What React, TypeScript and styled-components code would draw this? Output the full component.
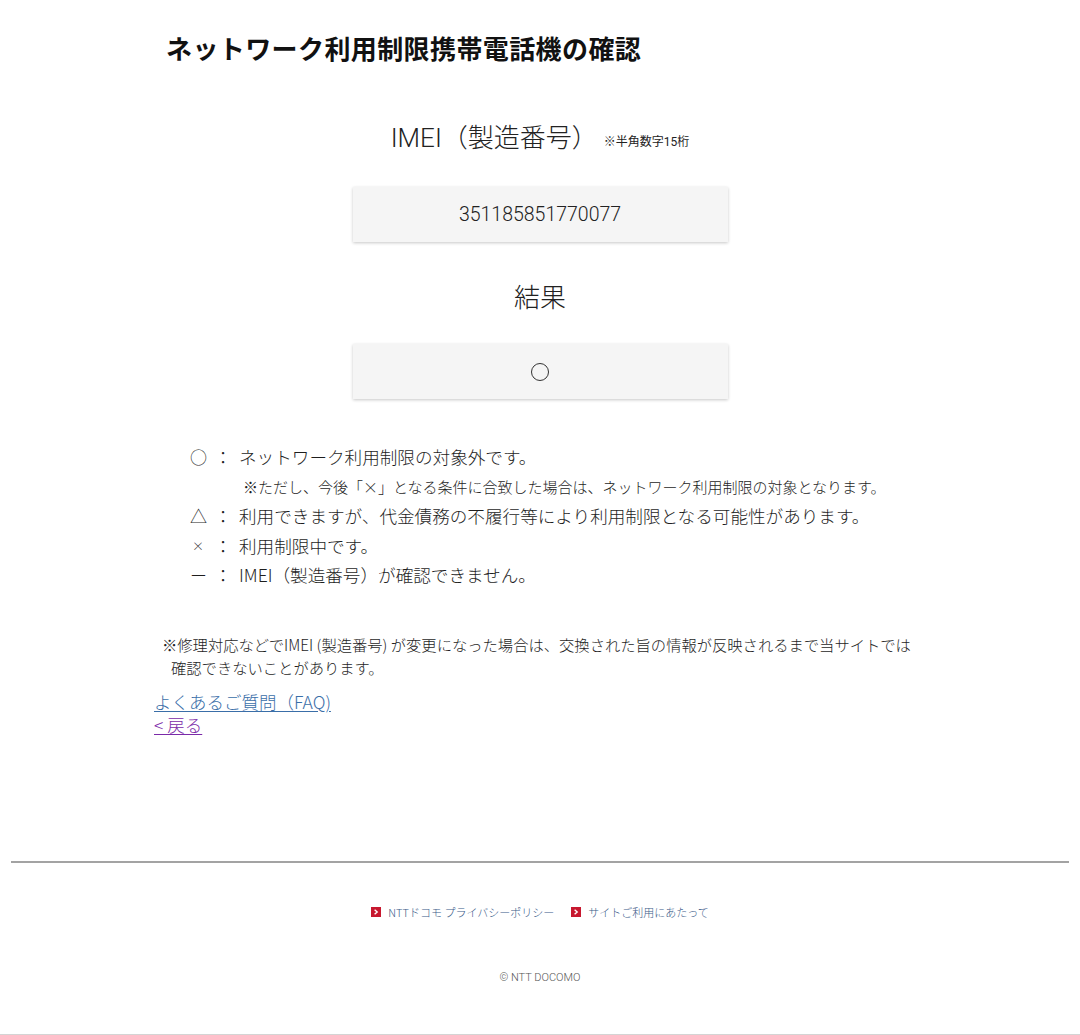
import React from "react";
import styled, { createGlobalStyle } from "styled-components";

const Global = createGlobalStyle`
  html, body { margin: 0; padding: 0; background: #fff; }
  body {
    font-family: Roboto, "Noto Sans CJK JP", sans-serif;
    color: #333;
  }
`;

const Page = styled.div`
  width: 1080px;
  min-height: 1035px;
  display: flex;
  flex-direction: column;
  border-bottom: 1px solid #d4d4d4;
  box-sizing: border-box;
`;

const Main = styled.main`
  width: 780px;
  margin: 0 auto;
  padding-top: 30px;
  display: flex;
  flex-direction: column;
`;

const Title = styled.h1`
  margin: 0;
  padding-left: 16px;
  font-family: "Noto Sans CJK JP", sans-serif;
  font-size: 26px;
  font-weight: 700;
  line-height: 36px;
  color: #111;
  letter-spacing: 0.4px;
`;

const Heading = styled.h2<{ $top: number }>`
  margin: ${(p) => p.$top}px 0 0;
  text-align: center;
  font-family: Roboto, "Noto Sans CJK JP", sans-serif;
  font-size: 26px;
  font-weight: 300;
  line-height: 36px;
  color: #222;
`;

const Note = styled.span`
  font-size: 12px;
  margin-left: 6px;
  font-weight: 400;
  vertical-align: 1px;
`;

const ValueBox = styled.div<{ $top: number }>`
  width: 375px;
  height: 55px;
  margin: ${(p) => p.$top}px auto 0;
  background: #f5f5f5;
  box-shadow: 0 1px 3px rgba(0, 0, 0, 0.22);
  display: flex;
  align-items: center;
  justify-content: center;
  font-family: Roboto, "Noto Sans CJK JP", sans-serif;
  font-size: 19.5px;
  font-weight: 300;
  color: #222;
`;

const Circle = styled.span`
  width: 18px;
  height: 18px;
  border: 1px solid #333;
  border-radius: 50%;
  box-sizing: border-box;
`;

const Legend = styled.ul`
  list-style: none;
  margin: 43px 0 0;
  padding: 0 0 0 40px;
  font-family: "Noto Sans CJK JP", sans-serif;
  font-size: 17.6px;
  font-weight: 300;
  line-height: 29.5px;
  color: #1e1e1e;
`;

const LegendRow = styled.li`
  display: flex;
  align-items: center;
`;

const Mark = styled.span`
  width: 24px;
  display: flex;
  align-items: center;
  font-size: 17px;
`;

const SmallMark = styled.span`
  font-size: 12px;
  padding-left: 2px;
`;

const Colon = styled.span`
  width: 18px;
  margin-right: 7px;
  text-align: center;
`;

const SubNote = styled.li`
  padding-left: 53px;
  font-size: 15px;
`;

const Remark = styled.p`
  margin: 43px 0 0;
  padding-left: 12px;
  font-family: "Noto Sans CJK JP", sans-serif;
  font-size: 15.3px;
  font-weight: 300;
  line-height: 23px;
  color: #1e1e1e;
  white-space: nowrap;
`;

const RemarkIndent = styled.span`
  display: block;
  padding-left: 9px;
`;

const Links = styled.div`
  margin-top: 11px;
  padding-left: 4px;
  display: flex;
  flex-direction: column;
  align-items: flex-start;
  font-family: "Noto Sans CJK JP", sans-serif;
  font-size: 17.5px;
  font-weight: 300;
  line-height: 23px;
`;

const TextLink = styled.a<{ $visited?: boolean }>`
  color: ${(p) => (p.$visited ? "#7b2aa8" : "#3a6ea8")};
  text-decoration: underline;
  text-underline-offset: 2px;
`;

const Rule = styled.hr`
  margin: 125px 11px 0;
  border: none;
  height: 2px;
  background: #a3a3a3;
`;

const Footer = styled.footer`
  display: flex;
  flex-direction: column;
  align-items: center;
  padding-top: 41px;
`;

const FooterNav = styled.nav`
  display: flex;
  gap: 17px;
  font-family: "Noto Sans CJK JP", sans-serif;
  font-size: 11px;
  font-weight: 300;
  line-height: 16px;
`;

const FooterLink = styled.a`
  display: flex;
  align-items: center;
  gap: 7px;
  color: #3a5a88;
  text-decoration: none;
`;

const RedIcon = styled.span`
  width: 10px;
  height: 10px;
  background: #c7182f;
  display: flex;
  align-items: center;
  justify-content: center;
`;

const Copy = styled.p`
  margin: 51px 0 0;
  font-family: Roboto, sans-serif;
  font-size: 11px;
  font-weight: 300;
  color: #555;
`;

const Chevron = () => (
  <svg width="6" height="6" viewBox="0 0 6 6">
    <path d="M1.6 0.8 L4.2 3 L1.6 5.2" stroke="#fff" strokeWidth="1.4" fill="none" />
  </svg>
);

export default function App() {
  return (
    <Page>
      <Global />
      <Main>
        <Title>ネットワーク利用制限携帯電話機の確認</Title>
        <Heading $top={54}>
          IMEI（製造番号）<Note>※半角数字15桁</Note>
        </Heading>
        <ValueBox $top={27}>351185851770077</ValueBox>
        <Heading $top={38}>結果</Heading>
        <ValueBox $top={28}>
          <Circle />
        </ValueBox>
        <Legend>
          <LegendRow>
            <Mark>○</Mark>
            <Colon>：</Colon>
            ネットワーク利用制限の対象外です。
          </LegendRow>
          <SubNote>※ただし、今後「×」となる条件に合致した場合は、ネットワーク利用制限の対象となります。</SubNote>
          <LegendRow>
            <Mark>△</Mark>
            <Colon>：</Colon>
            利用できますが、代金債務の不履行等により利用制限となる可能性があります。
          </LegendRow>
          <LegendRow>
            <Mark>
              <SmallMark>×</SmallMark>
            </Mark>
            <Colon>：</Colon>
            利用制限中です。
          </LegendRow>
          <LegendRow>
            <Mark>ー</Mark>
            <Colon>：</Colon>
            IMEI（製造番号）が確認できません。
          </LegendRow>
        </Legend>
        <Remark>
          ※修理対応などでIMEI (製造番号) が変更になった場合は、交換された旨の情報が反映されるまで当サイトでは
          <RemarkIndent>確認できないことがあります。</RemarkIndent>
        </Remark>
        <Links>
          <TextLink href="#faq">よくあるご質問（FAQ)</TextLink>
          <TextLink href="#back" $visited>
            &lt; 戻る
          </TextLink>
        </Links>
      </Main>
      <Rule />
      <Footer>
        <FooterNav>
          <FooterLink href="#privacy">
            <RedIcon>
              <Chevron />
            </RedIcon>
            NTTドコモ プライバシーポリシー
          </FooterLink>
          <FooterLink href="#terms">
            <RedIcon>
              <Chevron />
            </RedIcon>
            サイトご利用にあたって
          </FooterLink>
        </FooterNav>
        <Copy>© NTT DOCOMO</Copy>
      </Footer>
    </Page>
  );
}
